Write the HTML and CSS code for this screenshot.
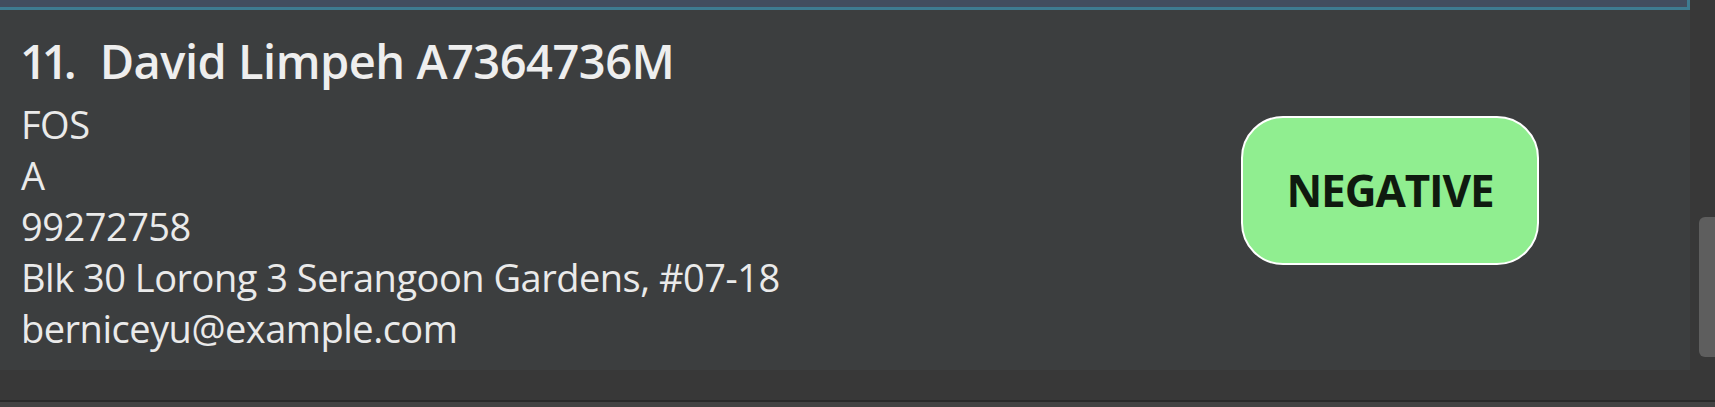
FILE: index.html
```html
<!DOCTYPE html>
<html lang="en">
<head>
<meta charset="utf-8">
<title>Person list</title>
<link rel="stylesheet" href="styles.css">
</head>
<body>
<div class="app">
  <div class="list-view">
    <div class="list">
      <div class="cell cell-selected"></div>
      <div class="cell card">
        <div class="card-info">
          <div class="card-title">
            <span class="card-id">11.</span>
            <span class="card-name">David Limpeh A7364736M</span>
          </div>
          <div class="card-line">FOS</div>
          <div class="card-line">A</div>
          <div class="card-line">99272758</div>
          <div class="card-line">Blk 30 Lorong 3 Serangoon Gardens, #07-18</div>
          <div class="card-line">berniceyu@example.com</div>
        </div>
        <div class="status status-negative">NEGATIVE</div>
      </div>
      <div class="list-empty"></div>
    </div>
    <div class="scrollbar">
      <div class="thumb"></div>
    </div>
  </div>
  <div class="divider"></div>
  <div class="footer"></div>
</div>
</body>
</html>
```
FILE: styles.css
```css
html, body {
  margin: 0;
  padding: 0;
}

body {
  width: 1715px;
  height: 407px;
  overflow: hidden;
  background: #383838;
  font-family: "Open Sans", "Noto Sans", sans-serif;
}

.app {
  display: flex;
  flex-direction: column;
  height: 407px;
}

.list-view {
  display: flex;
  height: 400px;
  background: #383838;
}

.list {
  width: 1690px;
  display: flex;
  flex-direction: column;
}

.cell-selected {
  height: 7px;
  background: #424d5f;
  border-bottom: 3px solid #3e7b91;
  border-right: 3px solid #3e7b91;
}

.card {
  height: 360px;
  box-sizing: border-box;
  background: #3c3e3f;
  display: flex;
  align-items: center;
  justify-content: space-between;
  padding: 0 151px 0 21px;
}

.card-info {
  display: flex;
  flex-direction: column;
  align-self: flex-start;
  padding-top: 21px;
}

.card-title {
  display: flex;
  gap: 28px;
  height: 60px;
  line-height: 60px;
  font-size: 47px;
  font-weight: 600;
  color: #eeeeee;
  letter-spacing: -0.5px;
  margin-bottom: 8px;
}

.card-id {
  margin-left: -1px;
  letter-spacing: -5px;
}

.card-line {
  font-size: 38px;
  line-height: 51px;
  height: 51px;
  color: #eaeaea;
  letter-spacing: -0.5px;
  white-space: nowrap;
}

.status {
  width: 298px;
  height: 149px;
  box-sizing: border-box;
  border: 2px solid #ffffff;
  border-radius: 42px;
  display: flex;
  align-items: center;
  justify-content: center;
  font-size: 44px;
  font-weight: 700;
  letter-spacing: -1.1px;
}

.status-negative {
  background: #90ee90;
  color: #0f1a0f;
}

.list-empty {
  flex: 1;
  background: #383838;
}

.scrollbar {
  width: 25px;
  overflow: hidden;
  background: #383838;
  display: flex;
  flex-direction: column;
  padding-left: 9px;
  box-sizing: border-box;
}

.thumb {
  margin-top: 217px;
  width: 24px;
  height: 140px;
  border-radius: 6px;
  background: #5e5e5e;
  flex: none;
}

.divider {
  height: 2px;
  background: #2a2a2a;
}

.footer {
  flex: 1;
  background: #424242;
}
```
